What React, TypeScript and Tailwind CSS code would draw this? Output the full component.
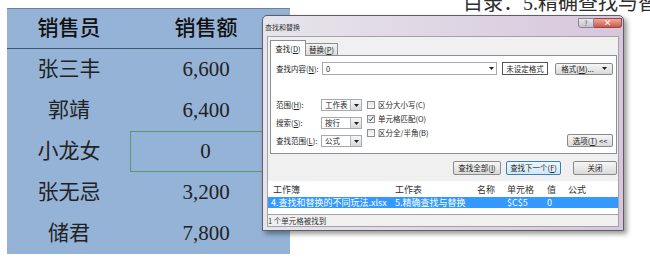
import React from 'react';

// 下拉框小三角
function Arrow() {
  return (
    <svg width="5" height="3" viewBox="0 0 5 3">
      <path d="M0 0h5L2.5 3z" fill="#222" />
    </svg>
  );
}

function Combo({ text }: { text: string }) {
  return (
    <div className="flex h-[12px] w-[41px] border border-[#a5a9b2] bg-white">
      <span className="flex flex-1 items-center pl-[3px] text-[7.5px] leading-none">{text}</span>
      <span className="flex w-[11px] items-center justify-center border-l border-[#b5b8be] bg-linear-to-b from-[#f7f7f7] to-[#d8d8d8]">
        <Arrow />
      </span>
    </div>
  );
}

function Check({ label, checked }: { label: string; checked?: boolean }) {
  return (
    <div className="flex h-[11px] items-center">
      <span className="flex h-[8px] w-[8px] items-center justify-center border border-[#8e8f8f] bg-linear-to-b from-[#e6e6e6] to-[#fbfbfb]">
        {checked && (
          <svg width="6" height="6" viewBox="0 0 6 6">
            <path d="M0.8 3.2 2.3 4.8 5.3 0.8" stroke="#2b3a55" strokeWidth="1" fill="none" />
          </svg>
        )}
      </span>
      <span className="ml-[3px] text-[7.5px] leading-none">{label}</span>
    </div>
  );
}

const btn =
  'flex items-center justify-center rounded-[2px] border border-[#8a8a8a] bg-linear-to-b from-[#f6f6f6] to-[#dadada] text-[7.5px] leading-none text-[#222]';

function FindDialog() {
  return (
    <div className="absolute left-[262px] top-[15px] flex h-[216px] w-[362px] flex-col rounded-t-[5px] border border-[#5f5d66] bg-linear-to-r from-[#e6e5ec] to-[#d8c6dc] px-[4px] pb-[3px] font-['Noto_Sans_CJK_SC',sans-serif] text-[#262626] shadow-[3px_3px_5px_rgba(0,0,0,0.4)]">
      {/* 标题栏 */}
      <div className="flex h-[20px] items-start">
        <span className="-ml-[2px] mt-[8px] text-[7px] leading-none text-[#333]">查找和替换</span>
        <div className="ml-auto -mr-[3px] mt-[2px] flex">
          <span className="flex h-[10px] w-[16px] items-center justify-center rounded-bl-[3px] border border-[#8c8592] bg-linear-to-b from-[#ebe7ef] to-[#c8bfcf] text-[7px] leading-none text-[#555]">
            ?
          </span>
          <span className="flex h-[10px] w-[28px] items-center justify-center rounded-br-[3px] border border-l-0 border-[#9a4a42] bg-linear-to-b from-[#ecaaa0] to-[#c9584b] text-[8px] font-bold leading-none text-white">
            ×
          </span>
        </div>
      </div>

      {/* 客户区 */}
      <div className="flex flex-1 flex-col border border-[#a3a1aa] bg-[#f0f0f0]">
        {/* 选项卡 */}
        <div className="ml-[2px] mt-[3px] flex h-[15px] items-end">
          <div className="relative z-10 -mb-[1px] flex h-[16px] w-[36px] items-center justify-center border border-b-0 border-[#8c8e94] bg-white text-[7.5px] leading-none">
            查找(<u>D</u>)
          </div>
          <div className="flex h-[12px] w-[32px] items-center justify-center border border-l-0 border-b-0 border-[#8c8e94] bg-linear-to-b from-[#f3f3f3] to-[#dcdcdc] text-[7.5px] leading-none">
            替换(<u>P</u>)
          </div>
        </div>

        {/* 选项卡内容 */}
        <div className="ml-[2px] flex h-[99px] w-[347px] flex-col border border-[#8c8e94] bg-white pl-[5px] pr-[3px]">
          <div className="mt-[6px] flex h-[13px] items-center">
            <span className="w-[46px] text-[7.5px] leading-none">查找内容(<u>N</u>):</span>
            <div className="flex h-[13px] w-[175px] border border-[#a5a9b2] bg-white">
              <span className="flex flex-1 items-center pl-[3px] text-[7.5px] leading-none">0</span>
              <span className="flex w-[9px] items-center justify-center">
                <Arrow />
              </span>
            </div>
            <span className="ml-[5px] flex h-[13px] w-[46px] items-center justify-center border border-[#555] bg-white text-[7.5px] leading-none">
              未设定格式
            </span>
            <span className={`${btn} ml-[7px] h-[12px] w-[58px] gap-[8px]`}>
              <span>
                格式(<u>M</u>)...
              </span>
              <Arrow />
            </span>
          </div>

          <div className="mt-[24px] flex h-[48px] items-start">
            <div className="flex flex-col gap-[6px]">
              {[
                ['范围(', 'H', '):', '工作表'],
                ['搜索(', 'S', '):', '按行'],
                ['查找范围(', 'L', '):', '公式'],
              ].map(([a, k, b, v]) => (
                <div key={a} className="flex items-center">
                  <span className="w-[45px] text-[7.5px] leading-none">
                    {a}
                    <u>{k}</u>
                    {b}
                  </span>
                  <Combo text={v} />
                </div>
              ))}
            </div>
            <div className="ml-[5px] flex flex-col gap-[3px]">
              <Check label="区分大小写(C)" />
              <Check label="单元格匹配(O)" checked />
              <Check label="区分全/半角(B)" />
            </div>
            <span className={`${btn} ml-auto h-[13px] w-[46px] self-end`}>
              选项(<u>T</u>) &lt;&lt;
            </span>
          </div>
        </div>

        {/* 按钮 */}
        <div className="mt-[7px] flex h-[14px] justify-end pr-[1px]">
          <span className={`${btn} w-[48px]`}>
            查找全部(<u>I</u>)
          </span>
          <span className="ml-[5px] flex w-[55px] items-center justify-center rounded-[2px] border border-[#3c7fb1] bg-linear-to-b from-[#eef7fd] to-[#cfe8f8] text-[7.5px] leading-none">
            查找下一个(<u>F</u>)
          </span>
          <span className={`${btn} ml-[12px] w-[44px]`}>关闭</span>
        </div>

        {/* 结果列表 */}
        <div className="mt-[6px] flex flex-col border-b border-[#a0a0a0] bg-white text-[9px] leading-none">
          <div className="grid h-[16px] grid-cols-[122px_82px_30px_40px_21px_1fr] items-center text-[#333]">
            <span className="pl-[5px]">工作簿</span>
            <span className="pl-[5px]">工作表</span>
            <span className="pl-[5px]">名称</span>
            <span className="pl-[5px]">单元格</span>
            <span className="pl-[5px]">值</span>
            <span className="pl-[5px]">公式</span>
          </div>
          <div className="grid h-[11px] grid-cols-[122px_82px_30px_40px_21px_1fr] items-center bg-[#3399ff] text-white">
            <span className="whitespace-nowrap pl-[3px]">4.查找和替换的不同玩法.xlsx</span>
            <span className="whitespace-nowrap pl-[5px]">5.精确查找与替换</span>
            <span />
            <span className="pl-[5px]">$C$5</span>
            <span className="pl-[5px]">0</span>
            <span />
          </div>
          <div className="h-[6px]" />
        </div>

        {/* 状态栏 */}
        <div className="flex h-[11px] items-center text-[7.5px] leading-none text-[#333]">1 个单元格被找到</div>
      </div>
    </div>
  );
}

const rows = [
  ['张三丰', '6,600'],
  ['郭靖', '6,400'],
  ['小龙女', '0'],
  ['张无忌', '3,200'],
  ['储君', '7,800'],
];

export default function App() {
  return (
    <div className="relative h-[261px] w-[650px] overflow-hidden bg-white font-['Liberation_Serif','Noto_Sans_CJK_SC',serif] text-[#222]">
      {/* 顶部目录 */}
      <div className="h-[15px] whitespace-nowrap pl-[463px]">
        <div className="-mt-[7px] text-[20px] leading-[20px] text-[#2e2e2e]">目录：5.精确查找与替换</div>
      </div>

      {/* 销售表 */}
      <div className="ml-[7px] w-[283px] bg-[#95b3d7] text-[21px] leading-none">
        <div className="grid h-[41px] grid-cols-[124px_150px] items-center border-t border-b border-t-[#6f8198] border-b-[#3f5672] text-center font-medium text-[#111]">
          <span>销售员</span>
          <span>销售额</span>
        </div>
        {rows.map(([name, amount], i) => (
          <div key={name} className="grid h-[41px] grid-cols-[124px_150px] items-stretch text-center">
            <span className="flex items-center justify-center">{name}</span>
            <span className={`flex items-center justify-center ${i === 2 ? '-ml-[1px] border border-[#5b9a69]' : ''}`}>{amount}</span>
          </div>
        ))}
      </div>

      <FindDialog />
    </div>
  );
}
